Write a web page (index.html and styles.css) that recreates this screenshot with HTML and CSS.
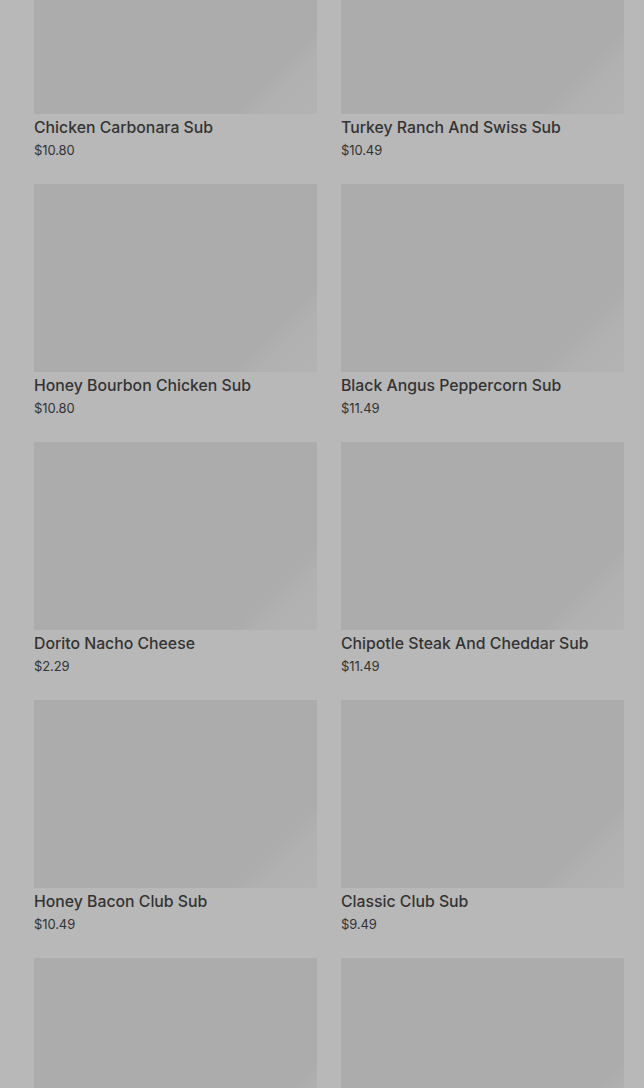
FILE: index.html
```html
<!DOCTYPE html>
<html lang="en">
<head>
    <meta charset="UTF-8">
    <meta name="viewport" content="width=device-width, initial-scale=1.0">
    <title>Menu</title>
    <link rel="stylesheet" href="styles.css">
</head>
<body>
    <div class="menu-grid">
        <div class="item">
            <div class="item-image"></div>
            <h3>Chicken Carbonara Sub</h3>
            <p>$10.80</p>
        </div>
        <div class="item">
            <div class="item-image"></div>
            <h3>Turkey Ranch And Swiss Sub</h3>
            <p>$10.49</p>
        </div>
        <div class="item">
            <div class="item-image"></div>
            <h3>Honey Bourbon Chicken Sub</h3>
            <p>$10.80</p>
        </div>
        <div class="item">
            <div class="item-image"></div>
            <h3>Black Angus Peppercorn Sub</h3>
            <p>$11.49</p>
        </div>
        <div class="item">
            <div class="item-image"></div>
            <h3>Dorito Nacho Cheese</h3>
            <p>$2.29</p>
        </div>
        <div class="item">
            <div class="item-image"></div>
            <h3>Chipotle Steak And Cheddar Sub</h3>
            <p>$11.49</p>
        </div>
        <div class="item">
            <div class="item-image"></div>
            <h3>Honey Bacon Club Sub</h3>
            <p>$10.49</p>
        </div>
        <div class="item">
            <div class="item-image"></div>
            <h3>Classic Club Sub</h3>
            <p>$9.49</p>
        </div>
        <div class="item">
            <div class="item-image"></div>
        </div>
        <div class="item">
            <div class="item-image"></div>
        </div>
    </div>
</body>
</html>
```

FILE: styles.css
```css
/* General */
* {
    margin: 0;
    padding: 0;
    box-sizing: border-box;
    font-family: 'Inter', sans-serif;
}

body {
    background-color: #b8b8b8;
    overflow: hidden;
}

/* Menu grid (page is scrolled a bit) */
.menu-grid {
    display: grid;
    grid-template-columns: 1fr 1fr;
    grid-auto-rows: 234px;
    column-gap: 24px;
    row-gap: 24px;
    padding: 0 20px 0 34px;
    margin-top: -74px;
}

.item-image {
    height: 188px;
    background: linear-gradient(135deg, #acacac 0%, #acacac 82%, #b1b1b1 88%, #b3b3b3 100%);
}

.item h3 {
    margin-top: 4px;
    font-size: 15.8px;
    line-height: 20px;
    font-weight: 500;
    color: #333333;
}

.item p {
    margin-top: 3px;
    font-size: 13px;
    line-height: 18px;
    color: #333333;
    letter-spacing: -0.1px;
}
```
